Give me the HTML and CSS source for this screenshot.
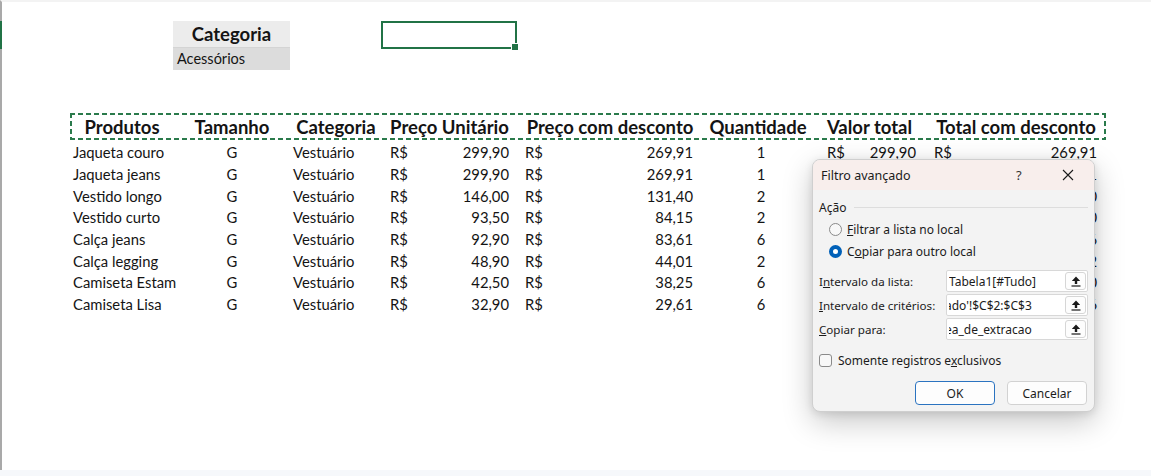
FILE: index.html
```html
<!DOCTYPE html>
<html lang="pt-BR">
<head>
<meta charset="utf-8">
<title>Filtro avançado</title>
<link rel="stylesheet" href="styles.css">
</head>
<body>
<div class="sheet">
  <div class="top">
    <div class="crit">
      <div class="crit-h">Categoria</div>
      <div class="crit-v">Acessórios</div>
    </div>
    <div class="sel"></div>
  </div>

  <div class="table">
    <div class="row head">
      <div>Produtos</div><div>Tamanho</div><div>Categoria</div><div>Preço Unitário</div><div>Preço com desconto</div><div>Quantidade</div><div>Valor total</div><div>Total com desconto</div>
    </div>
    <div class="row"><div class="l">Jaqueta couro</div><div class="c">G</div><div class="l">Vestuário</div><div class="m"><span>R$</span><span>299,90</span></div><div class="m me"><span>R$</span><span>269,91</span></div><div class="c q">1</div><div class="m mg"><span>R$</span><span>299,90</span></div><div class="m mh"><span>R$</span><span>269,91</span></div></div>
    <div class="row"><div class="l">Jaqueta jeans</div><div class="c">G</div><div class="l">Vestuário</div><div class="m"><span>R$</span><span>299,90</span></div><div class="m me"><span>R$</span><span>269,91</span></div><div class="c q">1</div><div class="m mg"><span>R$</span><span>299,90</span></div><div class="m mh"><span>R$</span><span>269,91</span></div></div>
    <div class="row"><div class="l">Vestido longo</div><div class="c">G</div><div class="l">Vestuário</div><div class="m"><span>R$</span><span>146,00</span></div><div class="m me"><span>R$</span><span>131,40</span></div><div class="c q">2</div><div class="m mg"><span>R$</span><span>292,00</span></div><div class="m mh"><span>R$</span><span>262,80</span></div></div>
    <div class="row"><div class="l">Vestido curto</div><div class="c">G</div><div class="l">Vestuário</div><div class="m"><span>R$</span><span>93,50</span></div><div class="m me"><span>R$</span><span>84,15</span></div><div class="c q">2</div><div class="m mg"><span>R$</span><span>187,00</span></div><div class="m mh"><span>R$</span><span>168,30</span></div></div>
    <div class="row"><div class="l">Calça jeans</div><div class="c">G</div><div class="l">Vestuário</div><div class="m"><span>R$</span><span>92,90</span></div><div class="m me"><span>R$</span><span>83,61</span></div><div class="c q">6</div><div class="m mg"><span>R$</span><span>557,40</span></div><div class="m mh"><span>R$</span><span>501,66</span></div></div>
    <div class="row"><div class="l">Calça legging</div><div class="c">G</div><div class="l">Vestuário</div><div class="m"><span>R$</span><span>48,90</span></div><div class="m me"><span>R$</span><span>44,01</span></div><div class="c q">2</div><div class="m mg"><span>R$</span><span>97,80</span></div><div class="m mh"><span>R$</span><span>88,02</span></div></div>
    <div class="row"><div class="l">Camiseta Estam</div><div class="c">G</div><div class="l">Vestuário</div><div class="m"><span>R$</span><span>42,50</span></div><div class="m me"><span>R$</span><span>38,25</span></div><div class="c q">6</div><div class="m mg"><span>R$</span><span>255,00</span></div><div class="m mh"><span>R$</span><span>229,50</span></div></div>
    <div class="row"><div class="l">Camiseta Lisa</div><div class="c">G</div><div class="l">Vestuário</div><div class="m"><span>R$</span><span>32,90</span></div><div class="m me"><span>R$</span><span>29,61</span></div><div class="c q">6</div><div class="m mg"><span>R$</span><span>197,40</span></div><div class="m mh"><span>R$</span><span>177,66</span></div></div>
  </div>
</div>
<div class="status"></div>

<div class="dialog">
  <div class="dlg-title">
    <span class="dlg-name">Filtro avançado</span>
    <span class="dlg-help">?</span>
    <span class="dlg-close"><svg width="12" height="12" viewBox="0 0 12 12"><path d="M1 1L11 11M11 1L1 11" stroke="#1a1a1a" stroke-width="1.1" fill="none"/></svg></span>
  </div>
  <div class="dlg-body">
    <div class="group"><span>Ação</span><span class="rule"></span></div>
    <div class="radio r1"><span class="dot"></span><span><u>F</u>iltrar a lista no local</span></div>
    <div class="radio on"><span class="dot"></span><span>C<u>o</u>piar para outro local</span></div>
    <div class="field first">
      <span class="flabel">I<u>n</u>tervalo da lista:</span>
      <div class="input"><span class="txt">Tabela1[#Tudo]</span><span class="pick"><svg width="10" height="11" viewBox="0 0 10 11"><path d="M5 0.5L9.2 5H6.2V8H3.8V5H0.8Z" fill="#1a1a1a"/><rect x="0.5" y="9.4" width="9" height="1.2" fill="#1a1a1a"/></svg></span></div>
    </div>
    <div class="field">
      <span class="flabel"><u>I</u>ntervalo de critérios:</span>
      <div class="input"><span class="txt cut">ado'!$C$2:$C$3</span><span class="pick"><svg width="10" height="11" viewBox="0 0 10 11"><path d="M5 0.5L9.2 5H6.2V8H3.8V5H0.8Z" fill="#1a1a1a"/><rect x="0.5" y="9.4" width="9" height="1.2" fill="#1a1a1a"/></svg></span></div>
    </div>
    <div class="field">
      <span class="flabel"><u>C</u>opiar para:</span>
      <div class="input"><span class="txt cut">ea_de_extracao</span><span class="pick"><svg width="10" height="11" viewBox="0 0 10 11"><path d="M5 0.5L9.2 5H6.2V8H3.8V5H0.8Z" fill="#1a1a1a"/><rect x="0.5" y="9.4" width="9" height="1.2" fill="#1a1a1a"/></svg></span></div>
    </div>
    <div class="check"><span class="box"></span><span>Somente registros e<u>x</u>clusivos</span></div>
    <div class="buttons"><button class="btn primary">OK</button><button class="btn">Cancelar</button></div>
  </div>
</div>
</body>
</html>
```
FILE: styles.css
```css
* { box-sizing: border-box; }
html, body { margin: 0; padding: 0; }
body {
  position: relative;
  width: 1151px;
  height: 476px;
  overflow: hidden;
  background: #fff;
  font-family: Lato, "Liberation Sans", sans-serif;
  color: #141414;
}
.sheet {
  height: 470px;
  border-top: 2px solid #f3f3f3;
  border-left: 2px solid #a9a9a9;
  position: relative;
  padding-top: 19px;
}
.sheet::before {
  content: "";
  position: absolute;
  left: -2px;
  top: 19px;
  width: 2px;
  height: 28px;
  background: #217346;
}
.status { height: 6px; background: #f6f8fb; }

.top { display: flex; align-items: flex-start; margin-left: 171px; }
.crit { width: 117px; }
.crit-h {
  height: 27px;
  background: #ececec;
  border-bottom: 1px solid #d4d4d4;
  font-weight: 700;
  font-size: 18.5px;
  line-height: 27px;
  text-align: center;
}
.crit-v {
  height: 22px;
  background: #dcdcdc;
  font-size: 14.5px;
  line-height: 22px;
  padding-left: 4px;
}
.sel {
  margin-left: 91px;
  width: 136px;
  height: 28px;
  border: 2px solid #217346;
  position: relative;
}
.sel::after {
  content: "";
  position: absolute;
  right: -4px;
  bottom: -4px;
  width: 6px;
  height: 6px;
  background: #217346;
  border: 1px solid #fff;
}

.table { margin: 43px 0 0 68px; width: 1036px; }
.row {
  display: grid;
  grid-template-columns: 104px 116px 92px 135px 186px 110px 113px 180px;
  height: 21.7px;
  align-items: center;
  font-size: 14.8px;
  white-space: nowrap;
}
.head {
  height: 27px;
  margin-bottom: 1.5px;
  font-weight: 700;
  font-size: 18.5px;
  padding-top: 1px;
  background:
    repeating-linear-gradient(90deg, #2a7a4b 0 5px, transparent 5px 8px) left top / 100% 2px no-repeat,
    repeating-linear-gradient(90deg, #2a7a4b 0 5px, transparent 5px 8px) left bottom / 100% 2px no-repeat,
    repeating-linear-gradient(180deg, #2a7a4b 0 5px, transparent 5px 8px) left top / 2px 100% no-repeat,
    repeating-linear-gradient(180deg, #2a7a4b 0 5px, transparent 5px 8px) right top / 2px 100% no-repeat;
}
.head > div { text-align: center; }
.row .l { padding-left: 3px; }
.row .c { text-align: center; }
.row .q { padding-left: 6px; }
.row .m { display: flex; justify-content: space-between; padding: 0 8px 0 8px; }
.row .me { padding-right: 10px; }
.row .mg { padding-left: 14px; padding-right: 10px; }
.row .mh { padding-right: 9px; }

/* dialog */
.dialog {
  position: absolute;
  left: 812px;
  top: 159px;
  width: 283px;
  height: 253px;
  border: 1px solid #cfcfcf;
  border-radius: 8px;
  background: #f3f3f3;
  box-shadow: 0 10px 30px rgba(0,0,0,0.22), 0 2px 8px rgba(0,0,0,0.10);
  font-family: "Noto Sans", "Open Sans", sans-serif;
  font-size: 12px;
  color: #1b1b1b;
  overflow: hidden;
}
.dlg-title {
  height: 30px;
  background: #f8eeec;
  display: flex;
  align-items: center;
  padding-left: 8px;
  font-size: 12.5px;
}
.dlg-name { flex: 1; }
.dlg-help { width: 14px; margin-right: 32px; font-size: 13px; color: #333; }
.dlg-close { width: 12px; height: 12px; margin-right: 20px; display: flex; }
.dlg-body {
  display: flex;
  flex-direction: column;
  padding: 0 6px 0 6px;
}
.group {
  display: flex;
  align-items: center;
  height: 16px;
  margin-top: 9px;
}
.group .rule { flex: 1; height: 1px; background: #dddddd; margin-left: 8px; }
.radio {
  display: flex;
  align-items: center;
  height: 22px;
  padding-left: 10px;
}
.radio.r1 { margin-top: 3px; }
.dot {
  width: 13px;
  height: 13px;
  border-radius: 50%;
  border: 1px solid #8a8a8a;
  background: #f8f8f8;
  margin-right: 5px;
}
.radio.on .dot {
  border: 4px solid #0060b8;
  background: #fff;
}
.field {
  display: flex;
  align-items: center;
  height: 22px;
  margin-top: 2px;
}
.field.first { margin-top: 8px; }
.flabel { width: 127px; font-size: 11.6px; white-space: nowrap; }
.input {
  width: 142px;
  height: 22px;
  background: #fff;
  border: 1px solid #d8d8d8;
  border-radius: 2px;
  display: flex;
  align-items: center;
  padding: 0 1px 0 2px;
}
.txt {
  flex: 1;
  overflow: hidden;
  white-space: nowrap;
  font-size: 12px;
}
.txt.cut { text-indent: -4px; }
.pick {
  width: 21px;
  height: 18px;
  border: 1px solid #d6d6d6;
  border-radius: 3px;
  background: #fdfdfd;
  display: flex;
  align-items: center;
  justify-content: center;
  margin-left: 2px;
}
.check {
  display: flex;
  align-items: center;
  height: 20px;
  margin-top: 10px;
}
.box {
  width: 13px;
  height: 13px;
  border: 1px solid #8a8a8a;
  border-radius: 3px;
  background: #f8f8f8;
  margin-right: 6px;
}
.buttons {
  display: flex;
  justify-content: flex-end;
  gap: 12px;
  margin-top: 11px;
  padding-right: 1px;
}
.btn {
  width: 80px;
  height: 24px;
  font-family: "Noto Sans", "Open Sans", sans-serif;
  font-size: 12px;
  color: #1b1b1b;
  background: #fdfdfd;
  border: 1px solid #d2d2d2;
  border-radius: 4px;
  padding: 0;
}
.btn.primary { border: 1.5px solid #2b73c0; }
```
